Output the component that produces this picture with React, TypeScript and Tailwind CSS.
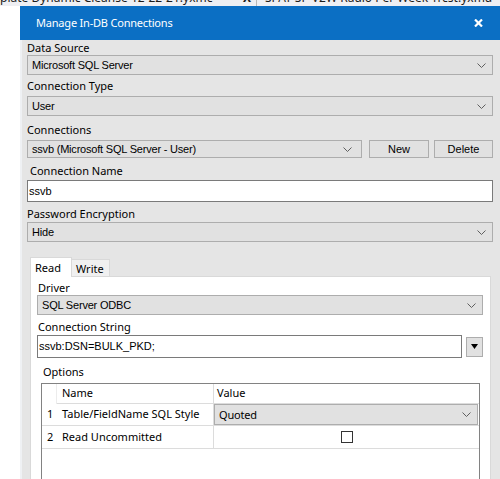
const UI = "font-['Noto_Sans',sans-serif]";
const MS = "font-['Liberation_Sans',Arial,sans-serif]";

function Chevron() {
  return (
    <svg width="9" height="5" viewBox="0 0 9 5" className="shrink-0">
      <polyline points="0.5,0.5 4.5,4.5 8.5,0.5" fill="none" stroke="#5f5f5f" strokeWidth="1" />
    </svg>
  );
}

function Combo({ text, className = "", font = MS }: { text: string; className?: string; font?: string }) {
  return (
    <div className={`flex items-center justify-between h-[20px] bg-[#e1e1e1] border border-[#adadad] pl-[4px] pr-[6px] ${className}`}>
      <span className={`${font} text-[11px] text-black tracking-[-0.2px] leading-none`}>{text}</span>
      <Chevron />
    </div>
  );
}

function Label({ text, className = "" }: { text: string; className?: string }) {
  return <div className={`${UI} text-[11px] leading-[15px] text-black ${className}`}>{text}</div>;
}

export default function App() {
  return (
    <div className="w-[500px] h-[479px] overflow-hidden bg-white flex flex-col">
      {/* tab strip of the app behind the dialog, mostly cut off */}
      <div className="h-[6px] shrink-0 overflow-hidden bg-[#eeeff3] flex">
        <div className={`${UI} text-[12px] leading-[15px] text-[#1b1b1b] -mt-[10px] w-[257px] flex justify-between pr-[5px] border-r border-[#b8b8b8]`}>
          <span>plate Dynamic Cleanse 12-22-21.yxmc</span>
          <span className="font-bold">X</span>
        </div>
        <div className={`${UI} text-[12px] leading-[15px] text-[#1b1b1b] -mt-[10px] pl-[8px] whitespace-nowrap`}>
          SPAT SP V2W Radio Per Week Trcst.yxmd
        </div>
      </div>

      <div className="flex-1 flex flex-col ml-[20px] bg-[#e5e5e5]">
        <div className="h-[34px] shrink-0 bg-[#0b6fc4] flex items-center justify-between pl-[16px] pr-[17px]">
          <span className={`${UI} text-[11px] tracking-[-0.2px] text-white`}>Manage In-DB Connections</span>
          <svg width="9" height="8" viewBox="0 0 9 8">
            <path d="M1 0.5 L8 7.5 M8 0.5 L1 7.5" stroke="white" strokeWidth="2.2" />
          </svg>
        </div>

        <div className="flex-1 flex flex-col border-l-2 border-[#eff1f4] pl-[5px] pr-[7px]">
          <Label text="Data Source" className="h-[15px]" />
          <Combo text="Microsoft SQL Server" />
          <Label text="Connection Type" className="h-[21px] pt-[3px]" />
          <Combo text="User" />
          <Label text="Connections" className="h-[24px] pt-[6px]" />
          <div className="flex h-[18px]">
            <Combo text="ssvb (Microsoft SQL Server - User)" className="flex-1 !h-[18px] pr-[9px]" />
            <button className={`ml-[7px] w-[60px] h-[18px] bg-[#e1e1e1] border border-[#adadad] ${MS} text-[11px] text-black`}>New</button>
            <button className={`ml-[5px] w-[59px] h-[18px] bg-[#e1e1e1] border border-[#adadad] ${MS} text-[11px] text-black`}>Delete</button>
          </div>
          <Label text="Connection Name" className="h-[22px] pt-[5px] pl-[3px]" />
          <div className={`h-[22px] bg-white border border-[#7a7a7a] flex items-center pl-[1px] ${MS} text-[11px] text-black`}>ssvb</div>
          <Label text="Password Encryption" className="h-[20px] pt-[4px]" />
          <Combo text="Hide" />

          {/* Read / Write tabs */}
          <div className="flex items-end mt-[14px] ml-[3px] h-[20px]">
            <div className={`w-[42px] h-[20px] bg-white border border-b-0 border-[#d9d9d9] relative z-10 -mb-px pl-[4px] pt-[2px] ${UI} text-[11px] leading-[15px] text-black`}>
              Read
            </div>
            <div className={`w-[38px] h-[17px] bg-[#f0f0f0] border border-l-0 border-b-0 border-[#d9d9d9] pl-[4px] pt-[1px] ${UI} text-[11px] leading-[15px] text-black`}>
              Write
            </div>
          </div>
          <div className="flex-1 flex flex-col ml-[3px] mr-[2px] bg-white border border-[#d9d9d9] pl-[6px] pr-[7px]">
            <Label text="Driver" className="h-[18px] pt-[3px] pl-[1px]" />
            <Combo text="SQL Server ODBC" />
            <Label text="Connection String" className="h-[20px] pt-[4px] pl-[1px]" />
            <div className="flex items-center h-[23px]">
              <div className={`flex-1 h-[23px] bg-white border border-[#7a7a7a] flex items-center pl-[1px] ${MS} text-[11px] text-black`}>
                ssvb:DSN=BULK_PKD;
              </div>
              <div className="ml-[4px] w-[17px] h-[20px] bg-[#e1e1e1] border border-[#adadad] flex items-center justify-center">
                <svg width="7" height="5" viewBox="0 0 7 5">
                  <polygon points="0,0 7,0 3.5,5" fill="black" />
                </svg>
              </div>
            </div>
            <Label text="Options" className="h-[25px] pt-[6px] pl-[6px]" />

            {/* options grid */}
            <div className={`ml-[4px] mr-[3px] h-[120px] border border-[#828282] bg-white ${UI} text-[11px] text-black`}>
              <div className="flex h-[20px]">
                <div className="w-[15px] border-r border-[#ececec]" />
                <div className="w-[157px] border-r border-b border-[#dcdcdc] pl-[5px] flex items-center">Name</div>
                <div className="flex-1 border-b border-[#dcdcdc] pl-[3px] flex items-center">Value</div>
              </div>
              <div className="flex h-[22px] border-b border-[#dcdcdc]">
                <div className="w-[15px] pl-[5px] flex items-center">1</div>
                <div className="w-[157px] border-r border-[#dcdcdc] pl-[5px] flex items-center">Table/FieldName SQL Style</div>
                <div className="flex-1 pr-[1px]">
                  <Combo text="Quoted" font={UI} className="!h-[21px] pl-[3px]" />
                </div>
              </div>
              <div className="flex h-[23px] border-b border-[#dcdcdc]">
                <div className="w-[15px] pl-[5px] flex items-center">2</div>
                <div className="w-[157px] border-r border-[#dcdcdc] pl-[5px] flex items-center">Read Uncommitted</div>
                <div className="flex-1 flex items-center justify-center">
                  <div className="w-[12px] h-[12px] border border-[#333333] bg-white" />
                </div>
              </div>
            </div>
          </div>
        </div>
      </div>
    </div>
  );
}
